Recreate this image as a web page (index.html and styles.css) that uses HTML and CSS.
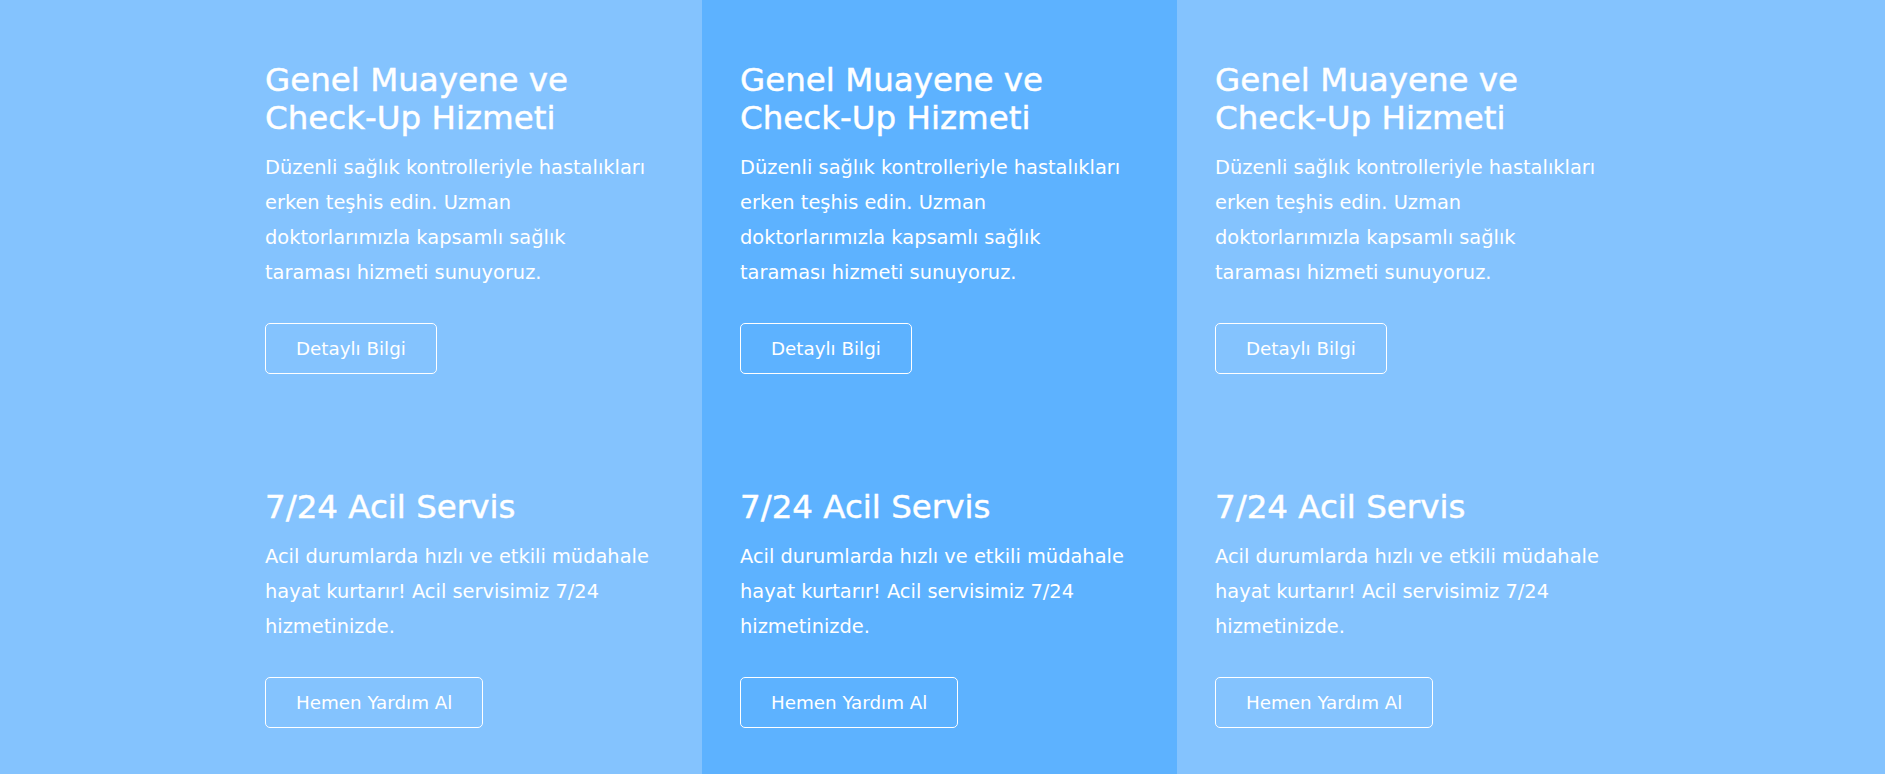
FILE: index.html
```html
<!DOCTYPE html>
<html lang="tr">
<head>
<meta charset="utf-8">
<title>Hizmetler</title>
<link rel="stylesheet" href="styles.css">
</head>
<body>
<section class="services">
  <div class="container">
    <div class="col">
      <div class="card">
        <h3 class="card-title">Genel Muayene ve<br>Check-Up Hizmeti</h3>
        <p class="card-text">Düzenli sağlık kontrolleriyle hastalıkları<br>erken teşhis edin. Uzman<br>doktorlarımızla kapsamlı sağlık<br>taraması hizmeti sunuyoruz.</p>
        <a class="btn" href="#">Detaylı Bilgi</a>
      </div>
      <div class="card">
        <h3 class="card-title">7/24 Acil Servis</h3>
        <p class="card-text">Acil durumlarda hızlı ve etkili müdahale<br>hayat kurtarır! Acil servisimiz 7/24<br>hizmetinizde.</p>
        <a class="btn" href="#">Hemen Yardım Al</a>
      </div>
    </div>
    <div class="col col-accent">
      <div class="card">
        <h3 class="card-title">Genel Muayene ve<br>Check-Up Hizmeti</h3>
        <p class="card-text">Düzenli sağlık kontrolleriyle hastalıkları<br>erken teşhis edin. Uzman<br>doktorlarımızla kapsamlı sağlık<br>taraması hizmeti sunuyoruz.</p>
        <a class="btn" href="#">Detaylı Bilgi</a>
      </div>
      <div class="card">
        <h3 class="card-title">7/24 Acil Servis</h3>
        <p class="card-text">Acil durumlarda hızlı ve etkili müdahale<br>hayat kurtarır! Acil servisimiz 7/24<br>hizmetinizde.</p>
        <a class="btn" href="#">Hemen Yardım Al</a>
      </div>
    </div>
    <div class="col">
      <div class="card">
        <h3 class="card-title">Genel Muayene ve<br>Check-Up Hizmeti</h3>
        <p class="card-text">Düzenli sağlık kontrolleriyle hastalıkları<br>erken teşhis edin. Uzman<br>doktorlarımızla kapsamlı sağlık<br>taraması hizmeti sunuyoruz.</p>
        <a class="btn" href="#">Detaylı Bilgi</a>
      </div>
      <div class="card">
        <h3 class="card-title">7/24 Acil Servis</h3>
        <p class="card-text">Acil durumlarda hızlı ve etkili müdahale<br>hayat kurtarır! Acil servisimiz 7/24<br>hizmetinizde.</p>
        <a class="btn" href="#">Hemen Yardım Al</a>
      </div>
    </div>
  </div>
</section>
</body>
</html>
```

FILE: styles.css
```css
* { box-sizing: border-box; }
html, body { margin: 0; padding: 0; }
body {
  background: #84c3fe;
  font-family: "DejaVu Sans", "Open Sans", sans-serif;
  color: #ffffff;
  overflow: hidden;
}
.services {
  min-height: 100vh;
}
.container {
  width: 1425px;
  margin-left: 227px;
  display: grid;
  grid-template-columns: 475px 475px 475px;
  min-height: 100vh;
}
.col {
  padding: 61px 38px 40px;
  display: flex;
  flex-direction: column;
  gap: 114px;
}
.col-accent {
  background: #5db2ff;
}
.card {
  display: flex;
  flex-direction: column;
  align-items: flex-start;
}
.card-title {
  margin: 0 0 13px;
  font-size: 32.5px;
  line-height: 38px;
  font-weight: 400;
  -webkit-text-stroke: 0.45px #ffffff;
}
.card-text {
  margin: 0 0 33px;
  font-size: 19.4px;
  line-height: 35px;
  font-weight: 400;
}
.btn {
  display: inline-flex;
  align-items: center;
  justify-content: center;
  height: 51px;
  padding: 0 30px;
  border: 1px solid #ffffff;
  border-radius: 5px;
  color: #ffffff;
  text-decoration: none;
  font-size: 18.3px;
}
```
